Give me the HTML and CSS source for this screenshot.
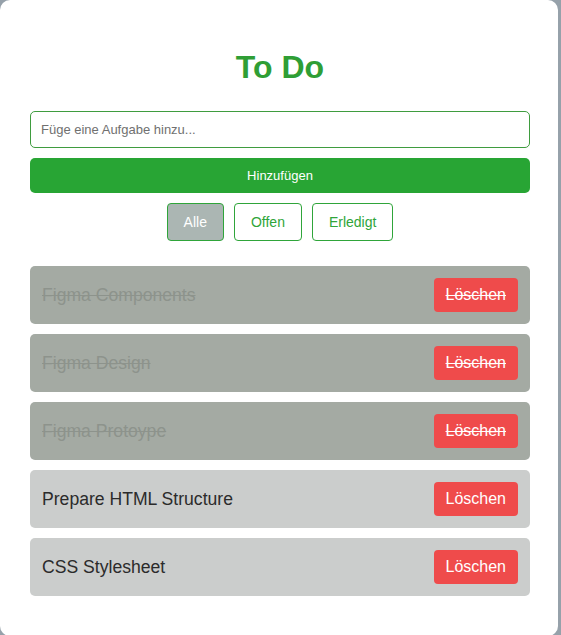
FILE: index.html
```html
<!DOCTYPE html>
<html lang="de">
<head>
<meta charset="utf-8">
<title>To Do</title>
<link rel="stylesheet" href="styles.css">
</head>
<body>
<main class="card">
  <h1 class="title">To Do</h1>
  <input class="task-input" type="text" placeholder="Füge eine Aufgabe hinzu...">
  <button class="add-btn">Hinzufügen</button>
  <div class="filters">
    <button class="filter active">Alle</button>
    <button class="filter">Offen</button>
    <button class="filter">Erledigt</button>
  </div>
  <ul class="list">
    <li class="item done"><span class="item-text">Figma Components</span><button class="del">Löschen</button></li>
    <li class="item done"><span class="item-text">Figma Design</span><button class="del">Löschen</button></li>
    <li class="item done"><span class="item-text">Figma Protoype</span><button class="del">Löschen</button></li>
    <li class="item"><span class="item-text">Prepare HTML Structure</span><button class="del">Löschen</button></li>
    <li class="item"><span class="item-text">CSS Stylesheet</span><button class="del">Löschen</button></li>
  </ul>
</main>
</body>
</html>
```
FILE: styles.css
```css
html, body {
  margin: 0;
  padding: 0;
}
body {
  background: #96a1aa;
  font-family: "Liberation Sans", Arial, Helvetica, sans-serif;
  height: 635px;
  overflow: hidden;
}
.card {
  box-sizing: border-box;
  width: 558px;
  min-height: 636px;
  background: #ffffff;
  border-radius: 10px;
  padding: 49px 28px 40px 30px;
  display: flex;
  flex-direction: column;
}
.title {
  margin: 0 0 25px;
  font-size: 32px;
  line-height: 37px;
  font-weight: bold;
  color: #2f9e35;
  text-align: center;
}
.task-input {
  box-sizing: border-box;
  width: 500px;
  height: 37px;
  margin: 0;
  padding: 10px;
  border: 1px solid #3f9c3f;
  border-radius: 5px;
  font-family: inherit;
  font-size: 13px;
  color: #333;
  outline: none;
}
.task-input::placeholder {
  color: #707070;
}
.add-btn {
  width: 500px;
  height: 35px;
  margin: 10px 0 0;
  padding: 0;
  border: none;
  border-radius: 5px;
  background: #28a534;
  color: #ffffff;
  font-family: inherit;
  font-size: 13px;
}
.filters {
  display: flex;
  justify-content: center;
  gap: 10px;
  margin-top: 10px;
}
.filter {
  height: 38px;
  padding: 0 16px;
  border: 1px solid #2fa53a;
  border-radius: 4px;
  background: #ffffff;
  color: #2fa53a;
  font-family: inherit;
  font-size: 14px;
}
.filter.active {
  background: #abb6b3;
  color: #ffffff;
}
.list {
  list-style: none;
  margin: 25px 0 0;
  padding: 0;
  display: flex;
  flex-direction: column;
  gap: 10px;
}
.item {
  box-sizing: border-box;
  height: 58px;
  padding: 12px;
  display: flex;
  align-items: center;
  justify-content: space-between;
  background: #cbcdcc;
  border-radius: 5px;
}
.item-text {
  font-size: 17.6px;
  color: #2b2b2b;
}
.del {
  height: 34px;
  padding: 0 12px;
  border: none;
  border-radius: 4px;
  background: #ef4b4b;
  color: #ffffff;
  font-family: inherit;
  font-size: 16px;
}
.item.done {
  background: #a4aaa3;
}
.item.done .item-text {
  color: #8d938c;
  text-decoration: line-through;
}
.item.done .del {
  text-decoration: line-through;
}
```
